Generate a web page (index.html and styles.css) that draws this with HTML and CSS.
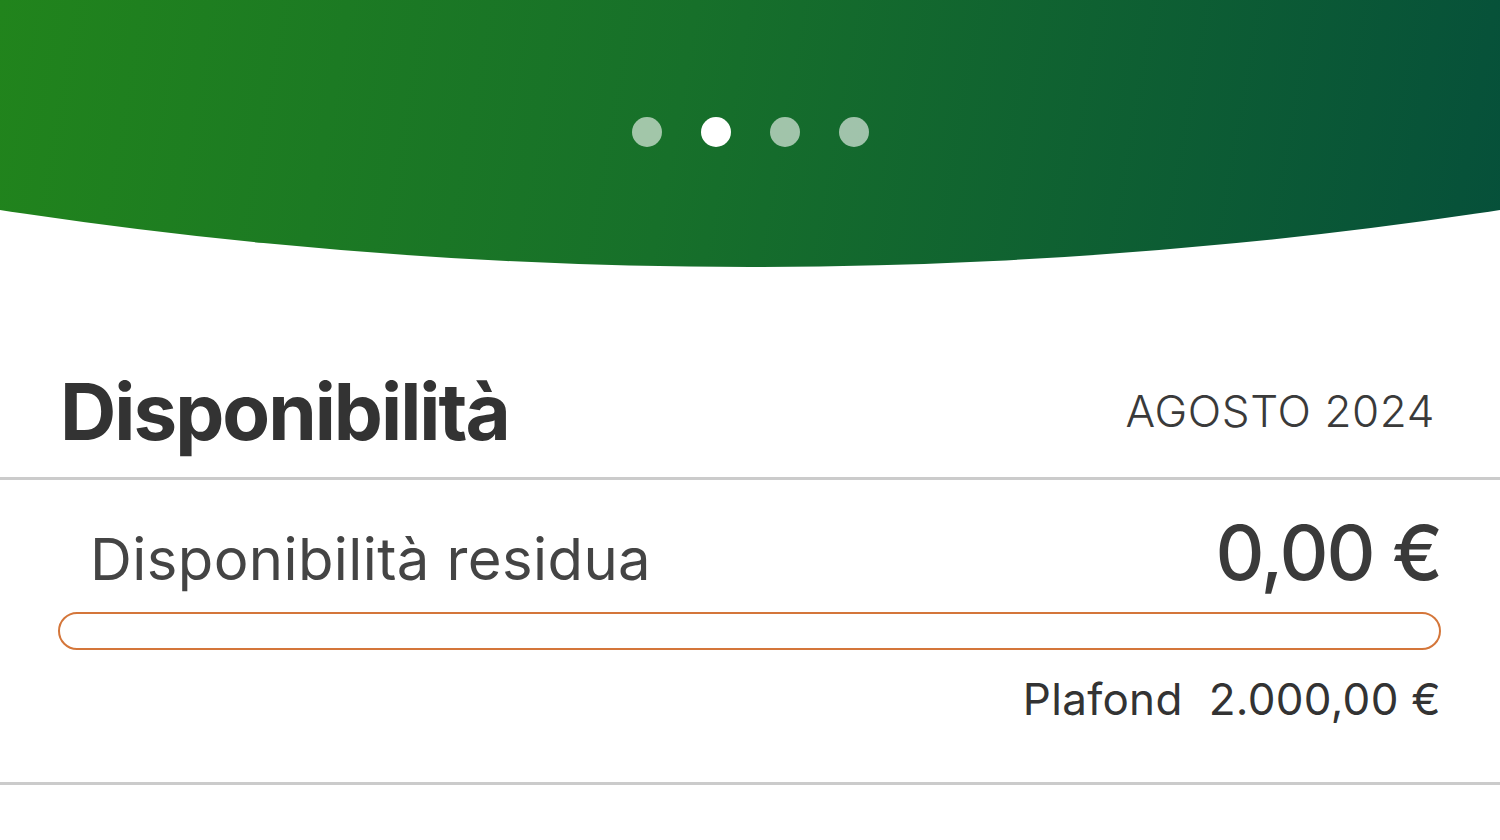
FILE: index.html
```html
<!DOCTYPE html>
<html lang="it">

<head>
    <meta charset="UTF-8">
    <meta name="viewport" content="width=device-width, initial-scale=1.0">
    <title>Disponibilità</title>
    <link rel="stylesheet" href="styles.css">
</head>

<body>
    <div class="hero">
        <div class="dots">
            <span class="dot"></span>
            <span class="dot active"></span>
            <span class="dot"></span>
            <span class="dot"></span>
        </div>
    </div>

    <div class="section-head">
        <h1>Disponibilità</h1>
        <span class="month">AGOSTO 2024</span>
    </div>

    <div class="card">
        <div class="row">
            <span class="label">Disponibilità residua</span>
            <span class="amount">0,00 €</span>
        </div>
        <div class="bar">
            <div class="bar-fill" style="width: 0%"></div>
        </div>
        <div class="plafond">
            <span>Plafond</span>
            <span>2.000,00 €</span>
        </div>
    </div>
</body>

</html>
```

FILE: styles.css
```css
body {
    font-family: Inter, "Noto Sans", sans-serif;
    margin: 0;
    background-color: white;
    color: #333;
}

.hero {
    height: 267px;
    background: linear-gradient(100deg, #21841c 0%, #17702a 45%, #06503a 100%);
    clip-path: circle(4963px at 50% -4696px);
}

.dots {
    display: flex;
    justify-content: center;
    gap: 39px;
    padding-top: 117px;
    padding-left: 1px;
}

.dot {
    width: 30px;
    height: 30px;
    border-radius: 50%;
    background-color: rgba(255, 255, 255, 0.6);
}

.dot.active {
    background-color: white;
}

.section-head {
    display: flex;
    justify-content: space-between;
    align-items: flex-end;
    padding: 0 65px 20px 60px;
    margin-top: 100px;
    border-bottom: 3px solid #cbcbcb;
}

.section-head h1 {
    margin: 0;
    font-size: 78px;
    line-height: 90px;
    font-weight: 700;
    letter-spacing: -2px;
    color: #333;
}

.month {
    font-size: 44px;
    line-height: 50px;
    font-weight: 300;
    letter-spacing: 0.6px;
    margin-bottom: 21px;
    color: #3a3a3a;
}

.card {
    padding: 26px 59px 56px 58px;
    border-bottom: 3px solid #cbcbcb;
}

.row {
    display: flex;
    justify-content: space-between;
    align-items: baseline;
    padding-left: 32px;
}

.label {
    font-size: 58px;
    color: #444;
    letter-spacing: 0.4px;
}

.amount {
    font-size: 76px;
    font-weight: 500;
    color: #3a3a3a;
    letter-spacing: -2px;
}

.bar {
    height: 34px;
    margin-top: 14px;
    border: 2px solid #d4763a;
    border-radius: 19px;
    overflow: hidden;
}

.bar-fill {
    height: 100%;
    background-color: #d4763a;
}

.plafond {
    display: flex;
    justify-content: flex-end;
    gap: 26px;
    margin-top: 22px;
    font-size: 44px;
    letter-spacing: 0.3px;
    color: #333;
}
```
